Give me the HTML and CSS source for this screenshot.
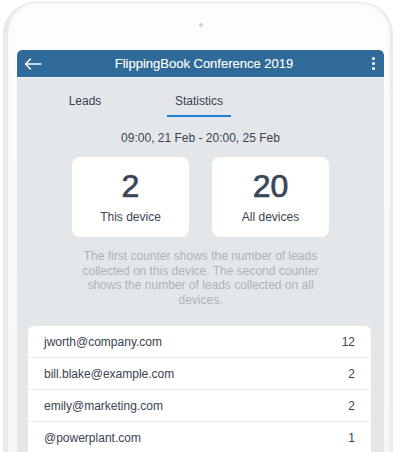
FILE: index.html
```html
<!DOCTYPE html>
<html>
<head>
<meta charset="utf-8">
<link rel="stylesheet" href="styles.css">
</head>
<body>
<div class="tablet">
  <div class="camera"></div>
  <div class="screen">
    <div class="header">
      <svg class="back" width="18" height="12" viewBox="0 0 18 12"><path d="M17 6H1.5M6.5 1L1.5 6l5 5" fill="none" stroke="#fff" stroke-width="1.4" stroke-linecap="round" stroke-linejoin="round"/></svg>
      <div class="title">FlippingBook Conference 2019</div>
      <div class="kebab"><span></span><span></span><span></span></div>
    </div>
    <div class="tabs">
      <div class="tab tab-leads">Leads</div>
      <div class="tab tab-stats active">Statistics</div>
    </div>
    <div class="date">09:00, 21 Feb - 20:00, 25 Feb</div>
    <div class="counters">
      <div class="counter"><div class="num">2</div><div class="label">This device</div></div>
      <div class="counter"><div class="num">20</div><div class="label">All devices</div></div>
    </div>
    <p class="note">The first counter shows the number of leads collected on this device. The second counter shows the number of leads collected on all devices.</p>
    <div class="list">
      <div class="row"><span>jworth@company.com</span><span>12</span></div>
      <div class="row"><span>bill.blake@example.com</span><span>2</span></div>
      <div class="row"><span>emily@marketing.com</span><span>2</span></div>
      <div class="row"><span>@powerplant.com</span><span>1</span></div>
    </div>
  </div>
</div>
</body>
</html>
```
FILE: styles.css
```css
* { box-sizing: border-box; }
html, body { margin: 0; padding: 0; background: #fff; overflow: hidden; }
body { font-family: "Liberation Sans", Arial, sans-serif; color: #3a4350; width: 400px; height: 452px; }

.tablet {
  margin: 2px 7px 0 3px;
  height: 460px;
  border: 1px solid #e4e6e9;
  border-left: 5px solid #e7e9eb;
  border-right: 3px solid #e9ebed;
  border-bottom: none;
  border-radius: 32px 32px 0 0;
  background: linear-gradient(180deg, #fdfdfd 0%, #f6f7f8 100%);
  padding: 0 6px 0 9px;
  box-shadow: inset 0 2px 6px rgba(0,0,0,0.03);
}
.camera {
  width: 4px; height: 4px; border-radius: 50%;
  background: #cdd0d4;
  margin: 20px auto 23px;
}
.screen {
  background: #e4e7ea;
  border-radius: 5px 5px 0 0;
  height: 410px;
  overflow: hidden;
}
.header {
  height: 28px;
  background: #2f6a98;
  border-bottom: 1px solid #eef1f3;
  border-radius: 5px 5px 0 0;
  display: flex;
  align-items: center;
  padding: 0 8px 0 7px;
}
.back { display: block; flex: none; }
.title {
  flex: 1;
  text-align: center;
  color: #fff;
  font-size: 13px;
  -webkit-text-stroke: 0.12px #fff;
  padding-right: 4px;
}
.kebab { display: flex; flex-direction: column; gap: 2px; width: 6px; align-items: center; }
.kebab span { width: 3px; height: 3px; border-radius: 50%; background: #fff; display: block; }

.tabs {
  height: 39px;
  display: flex;
  font-size: 12px;
  color: #3a4350;
}
.tab {
  display: flex;
  align-items: flex-end;
  justify-content: center;
  padding-bottom: 9px;
}
.tab-leads { width: 96px; margin-left: 20px; }
.tab-stats { width: 64px; margin-left: 34px; border-bottom: 2px solid #1f80da; padding-bottom: 7px; }

.date {
  text-align: center;
  font-size: 12px;
  line-height: 14px;
  margin-top: 14px;
}
.counters {
  display: flex;
  justify-content: center;
  gap: 23px;
  margin-top: 12px;
}
.counter {
  width: 117px;
  height: 80px;
  background: #fff;
  border-radius: 8px;
  text-align: center;
  padding-top: 13px;
}
.num {
  font-size: 32px;
  line-height: 32px;
  color: #3a4556;
  -webkit-text-stroke: 0.7px #3a4556;
}
.label {
  font-size: 12px;
  line-height: 14px;
  margin-top: 8px;
  color: #3a4350;
}
.note {
  width: 240px;
  margin: 12px auto 0;
  text-align: center;
  font-size: 12px;
  line-height: 14.5px;
  color: #adb2b7;
}
.list {
  margin: 19px 13px 0 11px;
  background: #fff;
  border-radius: 6px 6px 0 0;
}
.row {
  height: 32px;
  display: flex;
  justify-content: space-between;
  align-items: center;
  padding: 0 16px;
  font-size: 12px;
  color: #3a4350;
  border-top: 1px solid #e9ebed;
}
.row:first-child { border-top: none; height: 31px; }
```
